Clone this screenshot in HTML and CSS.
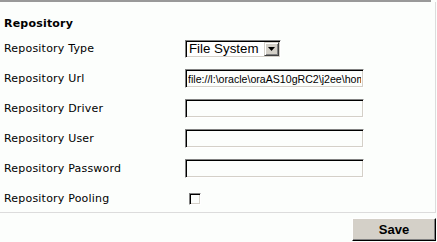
FILE: index.html
```html
<!DOCTYPE html>
<html>
<head>
<meta charset="utf-8">
<link rel="stylesheet" href="styles.css">
</head>
<body>
<div class="topbar"></div>
<div class="panel">
  <h2 class="title">Repository</h2>
  <div class="form">
    <div class="lbl">Repository Type</div>
    <div class="ctl">
      <div class="select">
        <span class="select-val">File System</span>
        <span class="select-btn"><svg width="7" height="4" viewBox="0 0 7 4"><path d="M0 0H7L3.5 4Z" fill="#000"/></svg></span>
      </div>
    </div>
    <div class="lbl">Repository Url</div>
    <div class="ctl"><input class="field" type="text" value="file://l:\oracle\oraAS10gRC2\j2ee\home\config"></div>
    <div class="lbl">Repository Driver</div>
    <div class="ctl"><input class="field" type="text" value=""></div>
    <div class="lbl">Repository User</div>
    <div class="ctl"><input class="field" type="text" value=""></div>
    <div class="lbl">Repository Password</div>
    <div class="ctl"><input class="field" type="password" value=""></div>
    <div class="lbl">Repository Pooling</div>
    <div class="ctl"><span class="check"></span></div>
  </div>
</div>
<div class="actions"><button class="btn" type="button">Save</button></div>
</body>
</html>
```

FILE: styles.css
```css
html, body {
  margin: 0;
  padding: 0;
  background: #fcfefc;
}
body {
  width: 437px;
  height: 242px;
  overflow: hidden;
  font-family: "DejaVu Sans", Verdana, sans-serif;
  font-size: 11px;
  color: #000;
}
.topbar {
  width: 431px;
  height: 2px;
  background: #999999;
}
.panel {
  width: 435px;
  height: 210px;
  border-right: 1px solid #dcdcdc;
  border-bottom: 1px solid #dcdcdc;
  box-sizing: content-box;
}
.title {
  margin: 0;
  padding: 14px 0 0 4px;
  font-size: 11px;
  line-height: 16px;
  font-weight: bold;
  letter-spacing: 0.2px;
}
.form {
  display: grid;
  grid-template-columns: 181px 1fr;
  grid-auto-rows: 30px;
  padding-left: 4px;
  padding-top: 2px;
}
.lbl {
  display: flex;
  align-items: center;
  line-height: 16px;
  letter-spacing: 0.2px;
}
.ctl {
  display: flex;
  align-items: center;
}
.field {
  box-sizing: border-box;
  width: 179px;
  height: 19px;
  margin: 0 0 1px 0;
  padding: 0 2px;
  background: #fcfefc;
  border-style: solid;
  border-width: 1px;
  border-color: #808080 #ffffff #ffffff #808080;
  box-shadow: inset 1px 1px 0 #000000, inset -1px -1px 0 #d4d0c8;
  font-family: "Liberation Sans", Arial, sans-serif;
  font-size: 10.6px;
  color: #000;
  outline: none;
}
.select {
  box-sizing: border-box;
  width: 96px;
  height: 18px;
  margin-top: -1px;
  display: flex;
  align-items: center;
  justify-content: space-between;
  background: #ffffff;
  border-style: solid;
  border-width: 1px;
  border-color: #808080 #ffffff #ffffff #808080;
  box-shadow: inset 1px 1px 0 #000000, inset -1px -1px 0 #d4d0c8;
  padding: 1px 1px 1px 3px;
  font-family: "Liberation Sans", Arial, sans-serif;
  font-size: 13.3px;
  line-height: 15px;
}
.select-val {
  white-space: nowrap;
}
.select-btn {
  box-sizing: border-box;
  width: 15px;
  height: 14px;
  display: flex;
  align-items: center;
  justify-content: center;
  background: #d4d0c8;
  border-style: solid;
  border-width: 1px;
  border-color: #d4d0c8 #404040 #404040 #d4d0c8;
  box-shadow: inset 1px 1px 0 #ffffff, inset -1px -1px 0 #808080;
}
.check {
  display: block;
  box-sizing: border-box;
  width: 12px;
  height: 12px;
  margin-left: 4px;
  margin-bottom: 1px;
  background: #fcfefc;
  border-style: solid;
  border-width: 1px;
  border-color: #808080 #ffffff #ffffff #808080;
  box-shadow: inset 1px 1px 0 #000000, inset -1px -1px 0 #d4d0c8;
}
.actions {
  display: flex;
  justify-content: flex-end;
  padding: 5px 1px 0 0;
}
.btn {
  box-sizing: border-box;
  width: 84px;
  height: 23px;
  margin: 0;
  padding: 0;
  background: #d4d0c8;
  border-style: solid;
  border-width: 1px;
  border-color: #ffffff #000000 #000000 #ffffff;
  box-shadow: inset -1px -1px 0 #808080;
  font-family: "Liberation Sans", Arial, sans-serif;
  font-size: 13px;
  font-weight: bold;
  color: #000;
}
```
